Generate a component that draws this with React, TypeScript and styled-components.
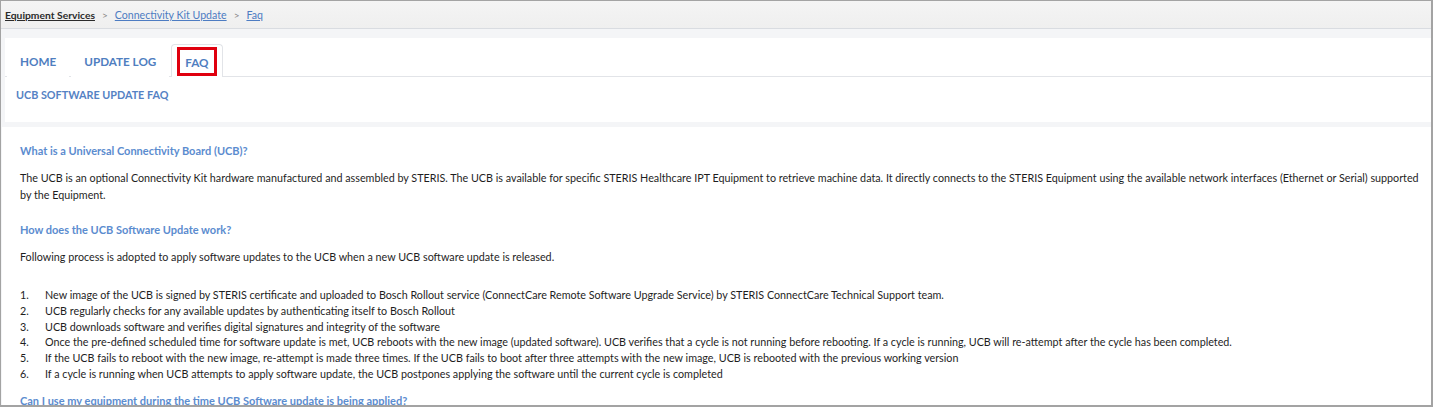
import React from "react";
import styled, { createGlobalStyle } from "styled-components";

const Global = createGlobalStyle`
  html, body { margin: 0; padding: 0; background: #fff; }
  body { font-family: Lato, "Open Sans", Arial, sans-serif; color: #222; }
  * { box-sizing: border-box; }
`;

const Frame = styled.div`
  width: 1433px;
  height: 407px;
  border: 1px solid #a3a3a3;
  border-right-width: 2px;
  border-bottom-width: 2px;
  overflow: hidden;
  background: #f4f5f7;
  display: flex;
  flex-direction: column;
`;

const Breadcrumb = styled.div`
  height: 28px;
  flex: none;
  display: flex;
  align-items: center;
  gap: 7px;
  padding-left: 4px;
  background: linear-gradient(#f4f4f4, #efefef);
  border-bottom: 1px solid #d9dce1;
  font-size: 10.6px;
`;

const Crumb = styled.a<{ $root?: boolean }>`
  color: ${(p) => (p.$root ? "#2b2b2b" : "#4d7cc2")};
  font-weight: ${(p) => (p.$root ? 700 : 400)};
  font-size: ${(p) => (p.$root ? "10.3px" : "10.6px")};
  text-decoration: underline;
`;

const Sep = styled.span`
  color: #888;
  font-size: 10px;
`;

const Body = styled.div`
  flex: 1;
  padding: 9px 0 0 4px;
  display: flex;
  flex-direction: column;
  gap: 5px;
`;

const TabsCard = styled.div`
  background: #fff;
  height: 84px;
  flex: none;
`;

const TabList = styled.div`
  display: flex;
  gap: 2px;
  padding: 6px 0 0 2px;
  height: 39px;
  border-bottom: 1px solid #e2e4e8;
`;

const Tab = styled.div<{ $active?: boolean }>`
  display: flex;
  align-items: center;
  padding: 0 12px;
  font-size: 11.7px;
  font-weight: 700;
  color: #4f7ec0;
  border: 1px solid ${(p) => (p.$active ? "#e2e4e8" : "transparent")};
  border-bottom: none;
  border-radius: 4px 4px 0 0;
  background: #fff;
  margin-bottom: -1px;
`;

const Highlight = styled.span`
  border: 3px solid #e0000f;
  padding: 4px 5px 3px;
  margin: 0 -7px;
  line-height: 16px;
`;

const SubTitle = styled.div`
  padding: 11px 0 0 11px;
  font-size: 10.8px;
  font-weight: 700;
  color: #5582c4;
`;

const Content = styled.div`
  background: #fff;
  flex: 1;
  margin-left: -3px;
  padding: 15px 0 0 18px;
  font-size: 10.75px;
  line-height: 17px;
  color: #1e1e1e;
`;

const Question = styled.h3`
  margin: 0 0 10px;
  font-size: 11px;
  font-weight: 700;
  color: #5b8ccf;
  line-height: 17px;
`;

const Para = styled.p`
  margin: 0 0 18px;
  padding-right: 8px;
`;

const Steps = styled.ol`
  margin: 22px 0 10px;
  padding: 0;
  list-style: none;
  counter-reset: step;
`;

const Step = styled.li`
  display: flex;
  line-height: 15.8px;
  &::before {
    counter-increment: step;
    content: counter(step) ".";
    width: 25px;
    flex: none;
  }
`;

export default function App() {
  return (
    <>
      <Global />
      <Frame>
        <Breadcrumb>
          <Crumb $root>Equipment Services</Crumb>
          <Sep>&gt;</Sep>
          <Crumb>Connectivity Kit Update</Crumb>
          <Sep>&gt;</Sep>
          <Crumb>Faq</Crumb>
        </Breadcrumb>
        <Body>
          <TabsCard>
            <TabList>
              <Tab>HOME</Tab>
              <Tab>UPDATE LOG</Tab>
              <Tab $active>
                <Highlight>FAQ</Highlight>
              </Tab>
            </TabList>
            <SubTitle>UCB SOFTWARE UPDATE FAQ</SubTitle>
          </TabsCard>
          <Content>
            <Question>What is a Universal Connectivity Board (UCB)?</Question>
            <Para>
              The UCB is an optional Connectivity Kit hardware manufactured and assembled by STERIS. The UCB is available for specific STERIS Healthcare IPT Equipment to retrieve machine data. It directly connects to the STERIS Equipment using the available network interfaces (Ethernet or Serial) supported by the Equipment.
            </Para>
            <Question>How does the UCB Software Update work?</Question>
            <Para>
              Following process is adopted to apply software updates to the UCB when a new UCB software update is released.
            </Para>
            <Steps>
              <Step>New image of the UCB is signed by STERIS certificate and uploaded to Bosch Rollout service (ConnectCare Remote Software Upgrade Service) by STERIS ConnectCare Technical Support team.</Step>
              <Step>UCB regularly checks for any available updates by authenticating itself to Bosch Rollout</Step>
              <Step>UCB downloads software and verifies digital signatures and integrity of the software</Step>
              <Step>Once the pre-defined scheduled time for software update is met, UCB reboots with the new image (updated software). UCB verifies that a cycle is not running before rebooting. If a cycle is running, UCB will re-attempt after the cycle has been completed.</Step>
              <Step>If the UCB fails to reboot with the new image, re-attempt is made three times. If the UCB fails to boot after three attempts with the new image, UCB is rebooted with the previous working version</Step>
              <Step>If a cycle is running when UCB attempts to apply software update, the UCB postpones applying the software until the current cycle is completed</Step>
            </Steps>
            <Question>Can I use my equipment during the time UCB Software update is being applied?</Question>
          </Content>
        </Body>
      </Frame>
    </>
  );
}
